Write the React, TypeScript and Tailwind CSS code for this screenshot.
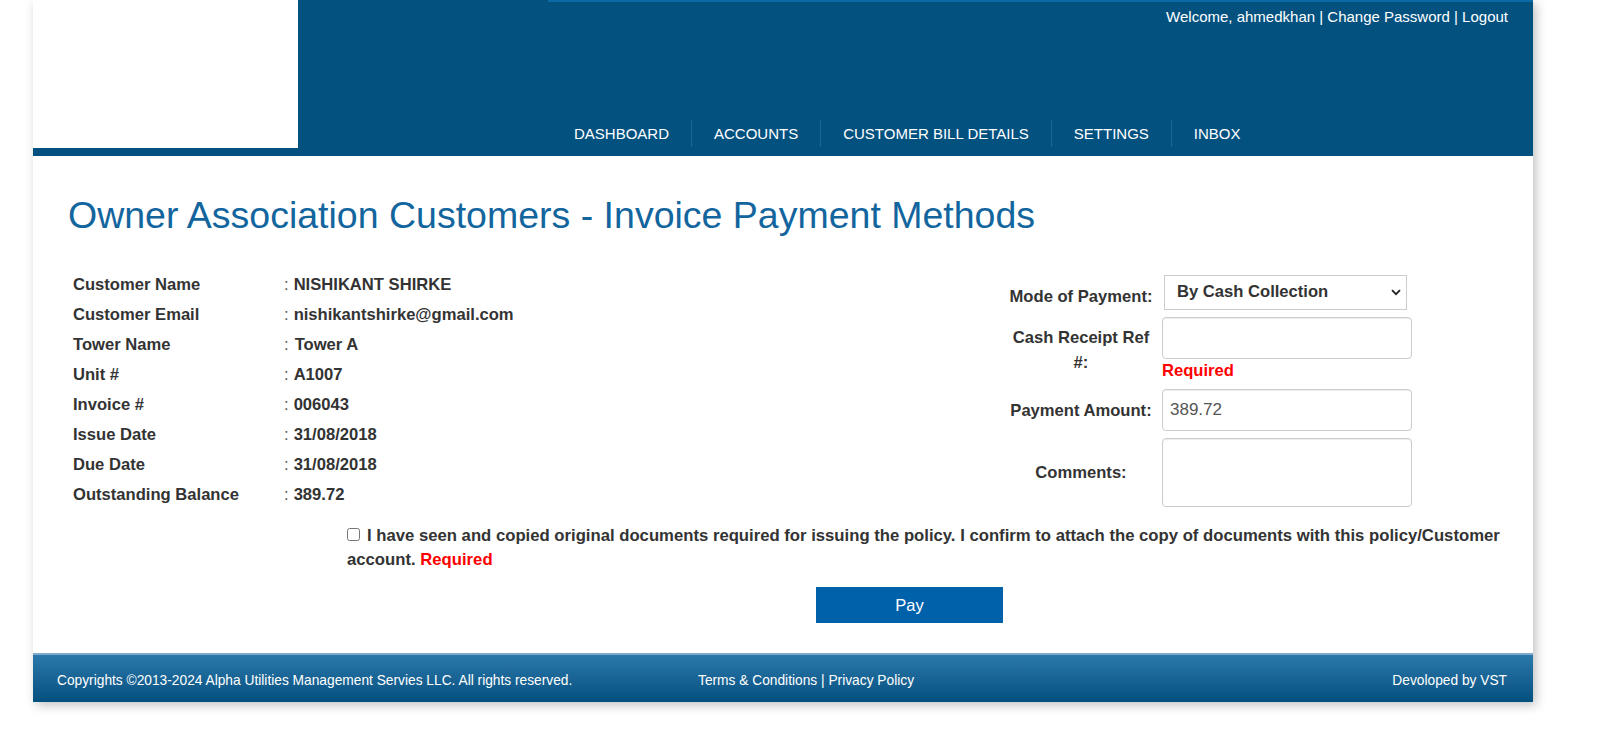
import React, { useState } from 'react';

const details: Array<[string, string]> = [
  ['Customer Name', 'NISHIKANT SHIRKE'],
  ['Customer Email', 'nishikantshirke@gmail.com'],
  ['Tower Name', 'Tower A'],
  ['Unit #', 'A1007'],
  ['Invoice #', '006043'],
  ['Issue Date', '31/08/2018'],
  ['Due Date', '31/08/2018'],
  ['Outstanding Balance', '389.72'],
];

const navItems = ['DASHBOARD', 'ACCOUNTS', 'CUSTOMER BILL DETAILS', 'SETTINGS', 'INBOX'];

export default function App() {
  const [mode, setMode] = useState('cash');
  const [amount, setAmount] = useState('389.72');
  const [agreed, setAgreed] = useState(false);

  return (
    <div className="min-h-[744px] bg-white font-['Liberation_Sans',Arial,sans-serif] text-[#333]">
      <div className="ml-[33px] w-[1500px] bg-white shadow-[3px_3px_10px_rgba(0,0,0,0.25)]">
        {/* header */}
        <header className="h-[156px] bg-[#03517f]">
          <div className="flex h-[148px]">
            <div className="w-[265px] h-[148px] bg-white" />
            <div className="flex flex-1 flex-col">
              <div className="ml-[250px] h-[2px] bg-[#0b6aa6]" />
              <div className="mt-[6px] pr-[25px] text-right text-[15px] leading-[17px] text-white">
                <a href="#">Welcome, ahmedkhan</a> | <a href="#">Change Password</a> | <a href="#">Logout</a>
              </div>
              <nav className="mt-auto mb-[1px] ml-[254px] flex">
                {navItems.map((item, i) => (
                  <a
                    key={item}
                    href="#"
                    className={
                      'h-[27px] px-[22px] text-[15px] leading-[27px] text-white ' +
                      (i > 0 ? 'border-l border-[#1f6597]' : '')
                    }
                  >
                    {item}
                  </a>
                ))}
              </nav>
            </div>
          </div>
        </header>

        {/* content */}
        <main className="pt-[39px]">
          <h1 className="ml-[35px] text-[37.5px] leading-[41px] font-normal text-[#13659e]">
            Owner Association Customers - Invoice Payment Methods
          </h1>

          <div className="mt-[34px] flex items-start">
            <div className="ml-[40px] w-[520px]">
              {details.map(([label, value]) => (
                <div key={label} className="flex h-[30px] items-center text-[16.6px] font-bold">
                  <span className="w-[211px]">{label}</span>
                  <span className="font-normal text-[#555]">:</span>
                  <span className={label === 'Tower Name' ? 'ml-[6px]' : 'ml-[5px]'}>{value}</span>
                </div>
              ))}
            </div>

            <div className="ml-auto mr-[121px] mt-[5px] flex flex-col text-[16.6px] font-bold">
              <div className="flex items-start">
                <label className="mt-[9px] w-[152px] text-center leading-[25px]">Mode of Payment:</label>
                <div className="relative ml-[7px]">
                  <select
                    value={mode}
                    onChange={(e) => setMode(e.target.value)}
                    className="h-[35px] w-[243px] appearance-none border border-[#ccc] bg-white pl-[12px] text-[16.6px] font-bold text-[#333] outline-none"
                  >
                    <option value="cash">By Cash Collection</option>
                    <option value="cheque">By Cheque</option>
                    <option value="card">By Card</option>
                  </select>
                  <svg
                    className="pointer-events-none absolute right-[6px] top-[14px]"
                    width="10"
                    height="7"
                    viewBox="0 0 10 7"
                  >
                    <path d="M1 1.2 L5 5.2 L9 1.2" fill="none" stroke="#222" strokeWidth="1.8" />
                  </svg>
                </div>
              </div>

              <div className="mt-[7px] flex items-center">
                <label className="w-[152px] text-center leading-[25px]">
                  Cash Receipt Ref
                  <br />
                  #:
                </label>
                <div className="ml-[5px]">
                  <input
                    type="text"
                    className="block h-[42px] w-[250px] rounded-[4px] border border-[#ccc] px-[8px] shadow-[inset_0_1px_1px_rgba(0,0,0,0.075)] outline-none"
                  />
                  <div className="leading-[24px] text-[#ff0000]">Required</div>
                </div>
              </div>

              <div className="mt-[6px] flex items-center">
                <label className="w-[152px] text-center leading-[25px]">Payment Amount:</label>
                <input
                  type="text"
                  value={amount}
                  onChange={(e) => setAmount(e.target.value)}
                  className="ml-[5px] block h-[42px] w-[250px] rounded-[4px] border border-[#ccc] px-[7px] text-[17px] font-normal text-[#555] shadow-[inset_0_1px_1px_rgba(0,0,0,0.075)] outline-none"
                />
              </div>

              <div className="mt-[7px] flex items-center">
                <label className="w-[152px] text-center leading-[25px]">Comments:</label>
                <textarea className="ml-[5px] block h-[69px] w-[250px] resize-none rounded-[4px] border border-[#ccc] px-[7px] font-normal shadow-[inset_0_1px_1px_rgba(0,0,0,0.075)] outline-none" />
              </div>
            </div>
          </div>

          <p className="ml-[314px] mt-[14px] w-[1175px] text-[16.7px] font-bold leading-[24px]">
            <input
              type="checkbox"
              checked={agreed}
              onChange={(e) => setAgreed(e.target.checked)}
              className="mb-[2px] mr-[7px] h-[13px] w-[13px] align-baseline"
            />
            I have seen and copied original documents required for issuing the policy. I confirm to attach the copy of
            documents with this policy/Customer account. <span className="text-[#ff0000]">Required</span>
          </p>

          <button
            type="button"
            className="ml-[783px] mt-[15px] block h-[36px] w-[187px] bg-[#0061ab] text-[16.5px] text-white"
          >
            Pay
          </button>
        </main>

        {/* footer */}
        <footer className="mt-[30px] flex h-[49px] items-center border-t-2 border-[#7faacb] bg-gradient-to-b from-[#2a78ab] to-[#03507f] pt-[5px] text-[13.75px] text-white">
          <span className="w-[665px] pl-[24px]">
            Copyrights ©2013-2024 Alpha Utilities Management Servies LLC. All rights reserved.
          </span>
          <span>
            <a href="#">Terms &amp; Conditions</a> | <a href="#">Privacy Policy</a>
          </span>
          <span className="ml-auto pr-[26px]">Devoloped by VST</span>
        </footer>
      </div>
    </div>
  );
}
